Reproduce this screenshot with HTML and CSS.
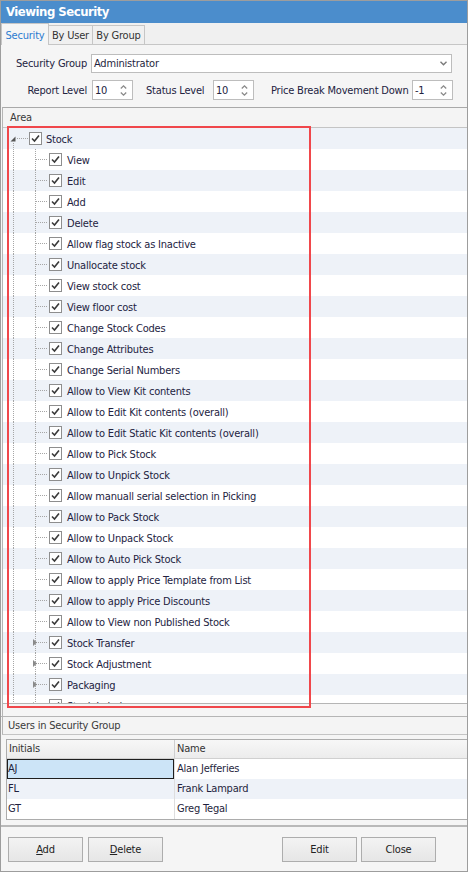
FILE: index.html
```html
<!DOCTYPE html>
<html>
<head>
<meta charset="utf-8">
<title>Viewing Security</title>
<link rel="stylesheet" href="styles.css">
</head>
<body>
<svg class="defs" width="0" height="0">
  <defs>
    <symbol id="cbox" viewBox="0 0 13 13">
      <rect x="0.5" y="0.5" width="12" height="12" fill="#fff" stroke="#8e8e8e"/>
      <path d="M3 6.5 L5.5 9 L10 3.5" fill="none" stroke="#3a3a3a" stroke-width="1.6"/>
    </symbol>
    <symbol id="g-child" viewBox="0 0 45 21">
      <path d="M10.5 0 V21 M32.5 0 V21 M33 10.5 H45" stroke="#a6a6a6" stroke-dasharray="1 1" fill="none"/>
    </symbol>
    <symbol id="g-exp" viewBox="0 0 45 21">
      <path d="M10.5 0 V21 M32.5 0 V21 M33 10.5 H45" stroke="#a6a6a6" stroke-dasharray="1 1" fill="none"/>
      <path d="M30 7 L34 10.5 L30 14 Z" fill="#8a8a8a"/>
    </symbol>
    <symbol id="g-root" viewBox="0 0 25 21">
      <path d="M10.5 15 V21 M14 10.5 H25" stroke="#a6a6a6" stroke-dasharray="1 1" fill="none"/>
      <path d="M12.5 8.5 V13.5 H7.5 Z" fill="#555"/>
    </symbol>
    <symbol id="chev" viewBox="0 0 7 5">
      <path d="M0.5 0.8 L3.5 3.8 L6.5 0.8" fill="none" stroke="#7a7a7a" stroke-width="1.4"/>
    </symbol>
    <symbol id="updown" viewBox="0 0 7 13">
      <path d="M0.8 4.5 L3.5 1.8 L6.2 4.5 M0.8 8.5 L3.5 11.2 L6.2 8.5" fill="none" stroke="#8a8a8a" stroke-width="1.3"/>
    </symbol>
  </defs>
</svg>
<div class="window">
  <div class="titlebar">Viewing Security</div>
  <div class="tabs">
    <div class="tab active">Security</div>
    <div class="tab u">By User</div>
    <div class="tab g">By Group</div>
    <div class="tabfill"></div>
  </div>
  <div class="form">
    <div class="frow">
      <span class="lbl lbl-sg">Security Group</span>
      <div class="combo"><span>Administrator</span><svg class="chev" width="7" height="5"><use href="#chev"/></svg></div>
    </div>
    <div class="frow r2">
      <span class="lbl lbl-rl">Report Level</span>
      <div class="spin"><span>10</span><svg class="ud" width="7" height="13"><use href="#updown"/></svg></div>
      <span class="lbl lbl-st">Status Level</span>
      <div class="spin"><span>10</span><svg class="ud" width="7" height="13"><use href="#updown"/></svg></div>
      <span class="lbl lbl-pb">Price Break Movement Down</span>
      <div class="spin"><span>-1</span><svg class="ud" width="7" height="13"><use href="#updown"/></svg></div>
    </div>
  </div>
  <div class="area">
    <div class="phead">Area</div>
    <div class="tree">
      <div class="row root"><svg class="guide" width="25" height="21"><use href="#g-root"/></svg><svg class="cb" width="13" height="13"><use href="#cbox"/></svg><span class="t">Stock</span></div>
      <div class="row"><svg class="guide" width="45" height="21"><use href="#g-child"/></svg><svg class="cb" width="13" height="13"><use href="#cbox"/></svg><span class="t">View</span></div>
      <div class="row"><svg class="guide" width="45" height="21"><use href="#g-child"/></svg><svg class="cb" width="13" height="13"><use href="#cbox"/></svg><span class="t">Edit</span></div>
      <div class="row"><svg class="guide" width="45" height="21"><use href="#g-child"/></svg><svg class="cb" width="13" height="13"><use href="#cbox"/></svg><span class="t">Add</span></div>
      <div class="row"><svg class="guide" width="45" height="21"><use href="#g-child"/></svg><svg class="cb" width="13" height="13"><use href="#cbox"/></svg><span class="t">Delete</span></div>
      <div class="row"><svg class="guide" width="45" height="21"><use href="#g-child"/></svg><svg class="cb" width="13" height="13"><use href="#cbox"/></svg><span class="t">Allow flag stock as Inactive</span></div>
      <div class="row"><svg class="guide" width="45" height="21"><use href="#g-child"/></svg><svg class="cb" width="13" height="13"><use href="#cbox"/></svg><span class="t">Unallocate stock</span></div>
      <div class="row"><svg class="guide" width="45" height="21"><use href="#g-child"/></svg><svg class="cb" width="13" height="13"><use href="#cbox"/></svg><span class="t">View stock cost</span></div>
      <div class="row"><svg class="guide" width="45" height="21"><use href="#g-child"/></svg><svg class="cb" width="13" height="13"><use href="#cbox"/></svg><span class="t">View floor cost</span></div>
      <div class="row"><svg class="guide" width="45" height="21"><use href="#g-child"/></svg><svg class="cb" width="13" height="13"><use href="#cbox"/></svg><span class="t">Change Stock Codes</span></div>
      <div class="row"><svg class="guide" width="45" height="21"><use href="#g-child"/></svg><svg class="cb" width="13" height="13"><use href="#cbox"/></svg><span class="t">Change Attributes</span></div>
      <div class="row"><svg class="guide" width="45" height="21"><use href="#g-child"/></svg><svg class="cb" width="13" height="13"><use href="#cbox"/></svg><span class="t">Change Serial Numbers</span></div>
      <div class="row"><svg class="guide" width="45" height="21"><use href="#g-child"/></svg><svg class="cb" width="13" height="13"><use href="#cbox"/></svg><span class="t">Allow to View Kit contents</span></div>
      <div class="row"><svg class="guide" width="45" height="21"><use href="#g-child"/></svg><svg class="cb" width="13" height="13"><use href="#cbox"/></svg><span class="t">Allow to Edit Kit contents (overall)</span></div>
      <div class="row"><svg class="guide" width="45" height="21"><use href="#g-child"/></svg><svg class="cb" width="13" height="13"><use href="#cbox"/></svg><span class="t">Allow to Edit Static Kit contents (overall)</span></div>
      <div class="row"><svg class="guide" width="45" height="21"><use href="#g-child"/></svg><svg class="cb" width="13" height="13"><use href="#cbox"/></svg><span class="t">Allow to Pick Stock</span></div>
      <div class="row"><svg class="guide" width="45" height="21"><use href="#g-child"/></svg><svg class="cb" width="13" height="13"><use href="#cbox"/></svg><span class="t">Allow to Unpick Stock</span></div>
      <div class="row"><svg class="guide" width="45" height="21"><use href="#g-child"/></svg><svg class="cb" width="13" height="13"><use href="#cbox"/></svg><span class="t">Allow manuall serial selection in Picking</span></div>
      <div class="row"><svg class="guide" width="45" height="21"><use href="#g-child"/></svg><svg class="cb" width="13" height="13"><use href="#cbox"/></svg><span class="t">Allow to Pack Stock</span></div>
      <div class="row"><svg class="guide" width="45" height="21"><use href="#g-child"/></svg><svg class="cb" width="13" height="13"><use href="#cbox"/></svg><span class="t">Allow to Unpack Stock</span></div>
      <div class="row"><svg class="guide" width="45" height="21"><use href="#g-child"/></svg><svg class="cb" width="13" height="13"><use href="#cbox"/></svg><span class="t">Allow to Auto Pick Stock</span></div>
      <div class="row"><svg class="guide" width="45" height="21"><use href="#g-child"/></svg><svg class="cb" width="13" height="13"><use href="#cbox"/></svg><span class="t">Allow to apply Price Template from List</span></div>
      <div class="row"><svg class="guide" width="45" height="21"><use href="#g-child"/></svg><svg class="cb" width="13" height="13"><use href="#cbox"/></svg><span class="t">Allow to apply Price Discounts</span></div>
      <div class="row"><svg class="guide" width="45" height="21"><use href="#g-child"/></svg><svg class="cb" width="13" height="13"><use href="#cbox"/></svg><span class="t">Allow to View non Published Stock</span></div>
      <div class="row"><svg class="guide" width="45" height="21"><use href="#g-exp"/></svg><svg class="cb" width="13" height="13"><use href="#cbox"/></svg><span class="t">Stock Transfer</span></div>
      <div class="row"><svg class="guide" width="45" height="21"><use href="#g-exp"/></svg><svg class="cb" width="13" height="13"><use href="#cbox"/></svg><span class="t">Stock Adjustment</span></div>
      <div class="row"><svg class="guide" width="45" height="21"><use href="#g-exp"/></svg><svg class="cb" width="13" height="13"><use href="#cbox"/></svg><span class="t">Packaging</span></div>
      <div class="row"><svg class="guide" width="45" height="21"><use href="#g-exp"/></svg><svg class="cb" width="13" height="13"><use href="#cbox"/></svg><span class="t">Stock Labels</span></div>
    </div>
  </div>
  <div class="gap"></div>
  <div class="users">
    <div class="phead">Users in Security Group</div>
    <div class="grid">
      <div class="gh"><div class="c1">Initials</div><div class="c2">Name</div></div>
      <div class="gr"><div class="c1 sel">AJ</div><div class="c2">Alan Jefferies</div></div>
      <div class="gr alt"><div class="c1">FL</div><div class="c2">Frank Lampard</div></div>
      <div class="gr"><div class="c1">GT</div><div class="c2">Greg Tegal</div></div>
    </div>
  </div>
  <div class="footer">
    <div class="btn"><span><u>A</u>dd</span></div>
    <div class="btn b2"><span><u>D</u>elete</span></div>
    <div class="btn b3"><span>Edit</span></div>
    <div class="btn b4"><span>Close</span></div>
  </div>
  <div class="hl"></div>
</div>
</body>
</html>
```
FILE: styles.css
```css
* { box-sizing: border-box; }
html, body { margin: 0; padding: 0; }
body {
  width: 468px;
  height: 872px;
  font-family: "DejaVu Sans Condensed", "DejaVu Sans", sans-serif;
  font-stretch: condensed;
  font-size: 11px;
  letter-spacing: -0.2px;
  color: #23233f;
  background: #fff;
}
.defs { position: absolute; width: 0; height: 0; overflow: hidden; }
.window {
  position: relative;
  width: 468px;
  height: 872px;
  border: 1px solid #9d9d9d;
  background: #f5f5f5;
  display: flex;
  flex-direction: column;
  overflow: hidden;
}
.titlebar {
  flex: none;
  height: 22px;
  line-height: 22px;
  padding-left: 5px;
  background: #4b8dcc;
  color: #fff;
  font-weight: bold;
  font-size: 13px;
  letter-spacing: -0.5px;
}
.tabs {
  flex: none;
  height: 22px;
  display: flex;
  align-items: flex-end;
  background: #f0f0f0;
}
.tab {
  flex: none;
  height: 20px;
  padding-top: 1px;
  line-height: 17px;
  text-align: center;
  border: 1px solid #c6c6c6;
  border-left: none;
  color: #333;
  background: #f0f0f0;
}
.tab.active {
  width: 48px;
  height: 22px;
  padding-top: 3px;
  line-height: 17px;
  border-left: 1px solid #c6c6c6;
  border-bottom: none;
  background: #f5f5f5;
  color: #2b7bd0;
}
.tab.u { width: 44px; }
.tab.g { width: 52px; }
.tabfill { flex: 1; height: 1px; background: #c6c6c6; }

.form { flex: none; height: 62px; padding-top: 9px; }
.frow { display: flex; align-items: center; }
.r2 { margin-top: 7px; }
.lbl { flex: none; white-space: nowrap; }
.lbl-sg, .lbl-rl { width: 86px; text-align: right; }
.lbl-sg { margin-right: 4px; }
.lbl-rl { margin-right: 5px; }
.lbl-st { margin-left: 13px; width: 67px; }
.lbl-pb { margin-left: 17px; width: 141px; }
.combo {
  flex: none;
  width: 361px;
  height: 19px;
  border: 1px solid #bdbdbd;
  background: #fff;
  display: flex;
  align-items: center;
  padding-left: 2px;
  color: #1f1f3d;
}
.combo .chev { margin-left: auto; margin-right: 4px; display: block; }
.spin {
  flex: none;
  width: 41px;
  height: 20px;
  border: 1px solid #bdbdbd;
  background: #fff;
  display: flex;
  align-items: center;
  padding-left: 2px;
}
.spin .ud { margin-left: auto; margin-right: 5px; display: block; }

.area {
  flex: none;
  margin-left: 1px;
  border-top: 1px solid #a9a9a9;
  border-left: 1px solid #b5b5b5;
  border-bottom: 1px solid #b5b5b5;
}
.phead {
  height: 20px;
  border-bottom: 1px solid #c4c4c4;
  background: #f4f4f4;
  padding-left: 7px;
  line-height: 19px;
  color: #3a3a3a;
}
.tree { height: 575px; overflow: hidden; background: #fff; }
.row { height: 21px; display: flex; align-items: center; white-space: nowrap; }
.row:nth-child(odd) { background: #eef2f8; }
.guide { flex: none; display: block; }
.cb { flex: none; display: block; margin-left: 1px; }
.row .t { margin-left: 5px; padding-top: 2px; }
.row.root .t { margin-left: 4px; }

.gap { flex: none; height: 12px; margin-left: 1px; border-left: 1px solid #b5b5b5; }
.users { flex: none; border-top: 1px solid #b5b5b5; }
.users .phead {
  height: 18px;
  line-height: 17px;
  margin-left: 1px;
  border-left: 1px solid #b5b5b5;
  padding-left: 5px;
}
.grid {
  margin: 4px 0 0 5px;
  border: 1px solid #acacac;
  border-right: none;
  background: #fff;
  color: #1f1f3d;
}
.gh, .gr { display: flex; height: 20px; line-height: 20px; }
.gh {
  height: 19px;
  line-height: 18px;
  background: linear-gradient(#f7f7f7, #ececec);
  border-bottom: 1px solid #d0d0d0;
  color: #333;
}
.c1 { flex: none; width: 168px; border-right: 1px solid #dedede; padding-left: 1px; }
.gh .c1 { padding-left: 2px; border-right-color: #cfcfcf; }
.c2 { flex: 1; padding-left: 2px; }
.gr.alt { background: #eef2f8; }
.c1.sel { background: #cce4f7; box-shadow: inset 0 0 0 1px #1e1e1e; }

.footer {
  flex: 1;
  margin-top: 5px;
  border-top: 2px solid #b9b9b9;
  padding: 10px 0 0 7px;
  display: flex;
  align-items: flex-start;
}
.btn {
  flex: none;
  width: 75px;
  height: 25px;
  border: 1px solid #adadad;
  background: linear-gradient(#f3f3f3, #e6e6e6);
  display: flex;
  align-items: center;
  justify-content: center;
  color: #222;
}
.b2 { margin-left: 5px; }
.b3 { margin-left: 119px; }
.b4 { margin-left: 4px; }

.hl {
  position: absolute;
  left: 6px;
  top: 125px;
  width: 304px;
  height: 582px;
  border: 2px solid #f0474b;
  pointer-events: none;
}
```
